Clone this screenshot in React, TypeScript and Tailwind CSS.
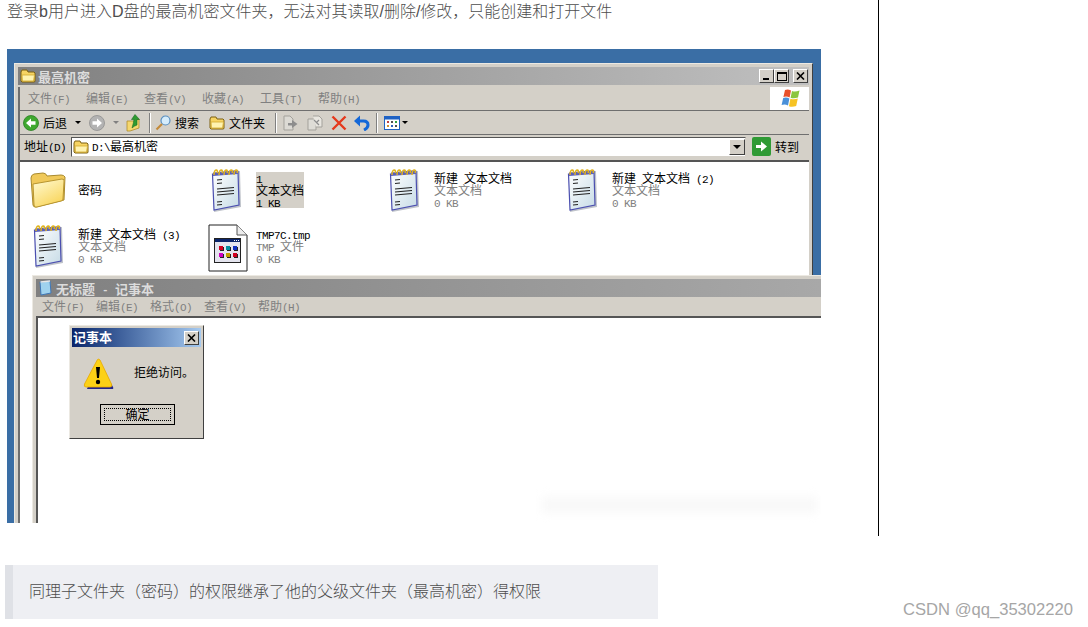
import type { ReactNode } from "react";

const simFont = "[font-family:'Noto_Sans_CJK_SC','Liberation_Sans',sans-serif]";

// old bitmap look: CJK cells are 12px, ascii cells are 6px
function Sim({ text }: { text: string }) {
  const parts = text.split(/([\x00-\x7f]+)/).filter(Boolean);
  return (
    <>
      {parts.map((p, i) =>
        /^[\x00-\x7f]/.test(p) ? (
          <span key={i} className="inline-block leading-[12px] font-['Liberation_Mono',monospace] text-[11px] tracking-[-0.6px] whitespace-pre">
            {p}
          </span>
        ) : (
          <span key={i} className="inline-block leading-[12px]">{p}</span>
        )
      )}
    </>
  );
}

function FolderSmall({ className = "w-4 h-[14px]" }: { className?: string }) {
  return (
    <svg viewBox="0 0 16 14" className={className}>
      <path d="M1 3 L2 1 H7 L8 3 H14 L15 4 V12.5 L14 13 H2 L1 12 Z" fill="#f7d463" stroke="#7d6113" strokeWidth="1" />
      <path d="M2 6 H14.5 L13.5 12 H2.5 Z" fill="#fff3b0" stroke="#d2a92f" strokeWidth="0.8" />
    </svg>
  );
}

function FolderBig() {
  return (
    <svg viewBox="0 0 36 36" className="w-9 h-9">
      <defs>
        <linearGradient id="fb" x1="0" y1="0" x2="0.6" y2="1">
          <stop offset="0" stopColor="#fffbd6" />
          <stop offset="1" stopColor="#f9d65e" />
        </linearGradient>
      </defs>
      <path d="M1 6 Q1 3 4 2 L13 1 Q16 1 17 4 L31 3 Q34 3 35 5 L34 28 L6 35 Q3 35 3 33 Z" fill="#f0c95a" stroke="#a98a2e" strokeWidth="1" />
      <path d="M3 12 L32 7 Q35 7 34 10 L33 27 Q33 29 31 29 L7 35 Q4 36 4 33 Z" fill="url(#fb)" stroke="#b8952f" strokeWidth="1" />
    </svg>
  );
}

function NotepadIcon() {
  return (
    <svg viewBox="0 0 30 43" className="w-[30px] h-[43px]">
      <defs>
        <linearGradient id="np" x1="0" y1="0" x2="1" y2="1">
          <stop offset="0" stopColor="#ffffff" />
          <stop offset="1" stopColor="#c6dbe6" />
        </linearGradient>
      </defs>
      <path d="M2 5 L29 2 L30 38 L3 43 Z" fill="#bfc3ca" />
      <path d="M1.5 5 L27 2.5 L28 36 L3 41 Z" fill="url(#np)" stroke="#4b4fb0" strokeWidth="1.2" />
      <path d="M2 3.5 L27 1 V5 L2 7 Z" fill="#5a5fb8" />
      {[3, 8, 13, 18, 23].map((x) => (
        <path key={x} d={`M${x} 6 Q${x} 1 ${x + 2.5} 1 Q${x + 4} 1.5 ${x + 3} 4`} fill="none" stroke="#e0b420" strokeWidth="1.5" />
      ))}
      <path d="M6 11 L11 10.5 M6 14.5 L11 14 M6 20 L23 18.5 M6 23 L23 21.5 M6 26 L23 24.5 M6 33 L11 32.5 M6 36 L11 35.5" stroke="#222" strokeWidth="1.1" />
    </svg>
  );
}

function TmpIcon() {
  const dots = ["#d00020", "#0090a0", "#1030c0", "#d000c0", "#c0a000", "#d00020"];
  return (
    <svg viewBox="0 0 40 48" className="w-10 h-12">
      <path d="M1 1 H29 L39 11 V47 H1 Z" fill="#fff" stroke="#222" strokeWidth="1" />
      <path d="M29 1 V11 H39" fill="#ececec" stroke="#555" strokeWidth="1" />
      <rect x="6.5" y="14.5" width="26" height="24" fill="#e4e4ee" stroke="#222" strokeWidth="1" />
      <rect x="7" y="15" width="25" height="3" fill="#0a246a" />
      <path d="M26 16.5 H31" stroke="#fff" strokeWidth="1" strokeDasharray="1 1" />
      {dots.map((c, i) => (
        <g key={i}>
          <rect x={12 + (i % 3) * 7} y={23 + Math.floor(i / 3) * 7} width="4" height="4" fill="#222" />
          <rect x={11 + (i % 3) * 7} y={22 + Math.floor(i / 3) * 7} width="4" height="4" fill={c} />
        </g>
      ))}
    </svg>
  );
}

function RoundArrow({ dir, color }: { dir: "left" | "right"; color: "green" | "grey" }) {
  const fill = color === "green" ? "#3fa82f" : "#b3b3b3";
  return (
    <svg viewBox="0 0 16 16" className="w-4 h-4 shrink-0">
      <circle cx="8" cy="8" r="7.5" fill={fill} stroke={color === "green" ? "#2a7d22" : "#8f8f8f"} strokeWidth="0.8" />
      <path
        d={dir === "left" ? "M3 8 L8 3.5 V6.3 H12.5 V9.7 H8 V12.5 Z" : "M13 8 L8 3.5 V6.3 H3.5 V9.7 H8 V12.5 Z"}
        fill="#fff"
      />
    </svg>
  );
}

function Caret({ className = "" }: { className?: string }) {
  return <span className={`w-0 h-0 border-x-[3px] border-x-transparent border-t-[3px] ${className}`} />;
}

function WinFlag() {
  return (
    <svg viewBox="0 0 20 19" className="w-5 h-[19px]">
      <path d="M5 1 Q8 0 11 1.5 L9.6 8.4 Q6.5 7 3.4 8 Z" fill="#e8502a" />
      <path d="M12 2 Q15 3.4 19.5 1.6 L18 8.5 Q14 10 10.6 8.8 Z" fill="#8cc63f" />
      <path d="M3.2 9 Q6.3 8 9.4 9.4 L8 16.4 Q5 15 1.6 16 Z" fill="#4a90d9" />
      <path d="M10.4 9.8 Q14 11 17.8 9.6 L16.2 17 Q12 18.5 9 17.2 Z" fill="#f6c324" />
    </svg>
  );
}

function Sep() {
  return <span className="block w-[2px] h-[20px] bg-[#808080] border-r border-white shrink-0" />;
}

function TitleBtn({ children, className = "" }: { children: ReactNode; className?: string }) {
  return (
    <span className={`w-[15px] h-[14px] flex items-center justify-center bg-[#d4d0c8] border border-t-white border-l-white border-r-[#404040] border-b-[#404040] ${className}`}>
      {children}
    </span>
  );
}

function CloseGlyph() {
  return (
    <svg viewBox="0 0 9 8" className="w-[9px] h-2">
      <path d="M1 0.5 L8 7.5 M8 0.5 L1 7.5" stroke="#000" strokeWidth="1.6" />
    </svg>
  );
}

function FileCell({
  icon,
  name,
  type,
  size,
  selected,
}: {
  icon: ReactNode;
  name: string;
  type?: string;
  size?: string;
  selected?: boolean;
}) {
  return (
    <div className="flex items-center h-[56px]">
      <div className="w-[58px] pr-[2px] flex justify-center shrink-0">{icon}</div>
      <div className={`text-[12px] leading-[12px] text-black ${selected ? "bg-[#d4d0c8] w-12" : ""}`}>
        <div className="whitespace-pre h-3">
          <Sim text={name} />
        </div>
        {type && (
          <div className={`h-3 ${selected ? "" : "text-[#808080]"}`}>
            <Sim text={type} />
          </div>
        )}
        {size && (
          <div className={`h-3 ${selected ? "" : "text-[#808080]"}`}>
            <Sim text={size} />
          </div>
        )}
      </div>
    </div>
  );
}

export default function App() {
  const explorerMenu = ["文件(F)", "编辑(E)", "查看(V)", "收藏(A)", "工具(T)", "帮助(H)"];
  const notepadMenu = ["文件(F)", "编辑(E)", "格式(O)", "查看(V)", "帮助(H)"];

  return (
    <div className="w-[1088px] h-[627px] overflow-hidden bg-white text-[#4d4d4d] font-['Liberation_Sans','Noto_Sans_CJK_SC',sans-serif]">
      <div className="w-[879px] h-[536px] border-r border-black">
        <p className="pl-[7px] text-[16px] leading-[22px] h-[22px] translate-y-px font-light whitespace-nowrap">
          登录b用户进入D盘的最高机密文件夹，无法对其读取/删除/修改，只能创建和打开文件
        </p>

        {/* screenshot */}
        <div className={`relative ml-[7px] mt-[27px] w-[814px] h-[474px] bg-[#3a6ea5] overflow-hidden ${simFont}`}>
          {/* explorer window */}
          <div className="absolute left-[7px] top-[14px] w-[799px] h-[480px] border border-t-[#ece9e2] border-l-[#ece9e2] border-r-[#404040] border-b-[#404040] bg-[#d4d0c8] pl-[3px] pr-[3px] pt-[3px] flex flex-col">
            <div className="h-[18px] bg-gradient-to-r from-[#808080] to-[#c0c0c0] flex items-center pl-[2px] pr-[1px]">
              <FolderSmall />
              <span className="ml-[2px] text-[13px] leading-none font-bold text-[#dcdcdc]">最高机密</span>
              <div className="ml-auto flex items-center">
                <TitleBtn>
                  <span className="w-[6px] h-[2px] bg-black mt-[6px] mr-[2px]" />
                </TitleBtn>
                <TitleBtn>
                  <span className="w-[10px] h-[9px] border border-t-2 border-black" />
                </TitleBtn>
                <TitleBtn className="ml-[4px]">
                  <CloseGlyph />
                </TitleBtn>
              </div>
            </div>

            <div className="flex-1 mt-[2px] border-l-2 border-[#6f6f6f] flex flex-col">
              {/* menu */}
              <div className="h-[24px] border-b border-[#6f6f6f] flex items-center pl-2 text-[12px] text-[#808080] shrink-0">
                <div className="flex gap-4">
                  {explorerMenu.map((m) => (
                    <span key={m} className="w-[42px] whitespace-pre -translate-y-px">
                      <Sim text={m} />
                    </span>
                  ))}
                </div>
                <div className="ml-auto w-[39px] h-[23px] bg-white flex items-center justify-center">
                  <WinFlag />
                </div>
              </div>

              {/* toolbar */}
              <div className="h-[24px] border-b border-[#6f6f6f] flex items-center text-[12px] text-black shrink-0">
                <span className="ml-[3px]">
                  <RoundArrow dir="left" color="green" />
                </span>
                <span className="ml-[4px]">后退</span>
                <Caret className="ml-[8px] border-t-black" />
                <span className="ml-[8px]">
                  <RoundArrow dir="right" color="grey" />
                </span>
                <Caret className="ml-[8px] border-t-[#808080]" />
                <svg viewBox="0 0 15 18" className="ml-[7px] w-[15px] h-[18px]">
                  <path d="M1 7 H8 L13 5 V14 L4 17 H1 Z" fill="#f5d76e" stroke="#b08e2c" strokeWidth="0.8" />
                  <path d="M9 0.5 L13.5 5.5 H11 V11 Q8 12 6 14 Q7.5 9 8 5.5 H5.5 Z" fill="#2e9b32" stroke="#1c6f22" strokeWidth="0.6" />
                </svg>
                <span className="ml-[8px]">
                  <Sep />
                </span>
                <svg viewBox="0 0 16 16" className="ml-[4px] w-4 h-4">
                  <circle cx="10.5" cy="5.5" r="4.5" fill="#d5ecfb" stroke="#5a8fc0" strokeWidth="1.2" />
                  <path d="M7 9 L1.5 14.5" stroke="#c48a3a" strokeWidth="2.2" />
                </svg>
                <span className="ml-[4px]">搜索</span>
                <span className="ml-[10px]">
                  <FolderSmall className="w-[16px] h-[14px]" />
                </span>
                <span className="ml-[4px]">文件夹</span>
                <span className="ml-[10px]">
                  <Sep />
                </span>
                <svg viewBox="0 0 16 16" className="ml-[5px] w-4 h-4">
                  <path d="M2 1 H8 L11 4 V15 H2 Z" fill="#dcdad4" stroke="#a3a19b" />
                  <path d="M6 8 H10 V5 L15.5 9 L10 13 V10.5 H6 Z" fill="#8d8d8d" />
                </svg>
                <svg viewBox="0 0 16 16" className="ml-[9px] w-4 h-4">
                  <path d="M1 4 H7 L9 6 V15 H1 Z" fill="#dedcd6" stroke="#a3a19b" />
                  <path d="M6 1 H12 L15 4 V12 H9" fill="#e8e6e0" stroke="#a3a19b" />
                  <path d="M7 5 L12 10 M12 5 L9 8" stroke="#8d8d8d" strokeWidth="1.2" />
                </svg>
                <svg viewBox="0 0 16 16" className="ml-[8px] w-4 h-4">
                  <path d="M1.5 1.5 L14.5 14.5 M14.5 1.5 L1.5 14.5" stroke="#e5391c" strokeWidth="2.4" />
                </svg>
                <svg viewBox="0 0 16 16" className="ml-[7px] w-4 h-4">
                  <path d="M4 6 H9.5 Q14 6 14 10 Q14 13 10 15" fill="none" stroke="#1468d8" strokeWidth="3" />
                  <path d="M0 6 L6 0.5 V11.5 Z" fill="#1468d8" />
                </svg>
                <span className="ml-[6px]">
                  <Sep />
                </span>
                <svg viewBox="0 0 16 16" className="ml-[6px] w-4 h-4">
                  <rect x="0.5" y="1.5" width="15" height="13" fill="#fff" stroke="#1f62c4" />
                  <rect x="1" y="2" width="14" height="2.5" fill="#1f62c4" />
                  <rect x="3" y="6" width="2" height="2" fill="#c04040" />
                  <rect x="7" y="6" width="2" height="2" fill="#505050" />
                  <rect x="11" y="6" width="2" height="2" fill="#30a040" />
                  <rect x="3" y="10" width="2" height="2" fill="#d09030" />
                  <rect x="7" y="10" width="2" height="2" fill="#3060c0" />
                  <rect x="11" y="10" width="2" height="2" fill="#505050" />
                </svg>
                <Caret className="ml-[2px] border-t-black" />
              </div>

              {/* address */}
              <div className="h-[23px] flex items-center text-[12px] text-black shrink-0">
                <span className="ml-[4px] w-[47px] whitespace-pre -translate-y-px">
                  <Sim text="地址(D)" />
                </span>
                <div className="w-[675px] h-[20px] bg-white border border-t-[#555] border-l-[#555] border-r-[#d4d0c8] border-b-[#d4d0c8] flex items-center pl-[1px]">
                  <FolderSmall />
                  <span className="ml-[3px] whitespace-pre -translate-y-px">
                    <Sim text="D:\最高机密" />
                  </span>
                  <span className="ml-auto w-[16px] h-[16px] bg-[#d4d0c8] border border-t-white border-l-white border-r-[#404040] border-b-[#404040] flex items-center justify-center">
                    <span className="w-0 h-0 border-x-[4px] border-x-transparent border-t-[4px] border-t-black" />
                  </span>
                </div>
                <span className="ml-[6px] w-[19px] h-[19px] rounded-[2px] bg-[#2f9a35] flex items-center justify-center">
                  <svg viewBox="0 0 13 13" className="w-[13px] h-[13px]">
                    <path d="M1 5 H6 V1.5 L12 6.5 L6 11.5 V8 H1 Z" fill="#fff" />
                  </svg>
                </span>
                <span className="ml-[4px]">转到</span>
              </div>

              <div className="h-[2px] shrink-0" />

              {/* files */}
              <div className="flex-1 border-t-2 border-[#555] bg-white">
                <div className="grid grid-cols-[repeat(4,178px)]">
                  <FileCell icon={<FolderBig />} name="密码" />
                  <FileCell icon={<NotepadIcon />} name="1" type="文本文档" size="1 KB" selected />
                  <FileCell icon={<NotepadIcon />} name="新建 文本文档" type="文本文档" size="0 KB" />
                  <FileCell icon={<NotepadIcon />} name="新建 文本文档 (2)" type="文本文档" size="0 KB" />
                  <FileCell icon={<NotepadIcon />} name="新建 文本文档 (3)" type="文本文档" size="0 KB" />
                  <FileCell icon={<span className="ml-[3px] mt-[4px] block"><TmpIcon /></span>} name="TMP7C.tmp" type="TMP 文件" size="0 KB" />
                </div>
              </div>
            </div>
          </div>

          {/* notepad window */}
          <div className="absolute left-[25px] top-[226px] right-0 bottom-0 border-t border-l border-[#ece9e2] bg-[#d4d0c8] pl-[3px] pt-[3px] flex flex-col">
            <div className="h-[18px] bg-gradient-to-r from-[#808080] to-[#a8a8a8] flex items-center pl-[3px] shrink-0">
              <svg viewBox="0 0 13 16" className="w-[13px] h-4">
                <path d="M1 2 L11 1 L12 13 L2 15 Z" fill="#9fd2ee" stroke="#3f78b8" strokeWidth="1" />
                <path d="M1.5 2 L11 1" stroke="#e8e8e8" strokeWidth="1.4" />
              </svg>
              <span className="ml-[4px] text-[13px] leading-none font-bold text-[#dcdcdc]">无标题</span>
              <span className="mx-[1px] text-[13px] leading-none font-bold text-[#dcdcdc] whitespace-pre">
                <Sim text=" - " />
              </span>
              <span className="text-[13px] leading-none font-bold text-[#dcdcdc]">记事本</span>
            </div>
            <div className="h-[19px] flex items-center pl-[6px] gap-3 text-[12px] text-[#808080] shrink-0">
              {notepadMenu.map((m) => (
                <span key={m} className="w-[42px] whitespace-pre -translate-y-px">
                  <Sim text={m} />
                </span>
              ))}
            </div>
            <div className="relative flex-1 bg-white border-t-2 border-l-2 border-[#555]">
              {/* blurred watermark */}
              <div className="absolute left-[504px] top-[178px] w-[275px] h-[18px] bg-[#f9f9f9] blur-[4px]" />

              {/* alert dialog */}
              <div className="absolute left-[31px] top-[7px] w-[135px] h-[114px] bg-[#d4d0c8] border border-t-[#ece9e2] border-l-[#ece9e2] border-r-[#404040] border-b-[#404040] p-[2px] text-black">
                <div className="h-[19px] bg-gradient-to-r from-[#0a246a] to-[#a6caf0] flex items-center pl-[1px] pr-[2px]">
                  <span className="text-[13px] leading-none font-bold text-white -translate-y-px">记事本</span>
                  <TitleBtn className="ml-auto w-4">
                    <CloseGlyph />
                  </TitleBtn>
                </div>
                <div className="flex items-center pl-[11px] mt-[11px]">
                  <svg viewBox="0 0 32 32" className="w-8 h-8">
                    <path d="M15 2 L30 29 Q31 31 29 31 H4 Z" fill="#23268a" />
                    <path d="M14.5 1.5 Q15.5 0.5 17 2 L28.5 26 Q29.5 29 27 29 H3 Q0.5 29 1.5 26 Z" fill="#fcd116" stroke="#e8a800" strokeWidth="0.8" />
                    <path d="M13 9 H17 L16 20 H14 Z" fill="#000" />
                    <circle cx="15" cy="24" r="2.2" fill="#000" />
                  </svg>
                  <span className="ml-[19px] text-[12px] -translate-y-[2px]">拒绝访问。</span>
                </div>
                <div className="mt-[14px] ml-[28px] w-[75px] h-[21px] border border-black bg-[#d4d0c8] p-[3px]">
                  <div className="h-full border border-dotted border-black flex items-center justify-center text-[12px] leading-none">
                    <span className="-translate-y-px">确定</span>
                  </div>
                </div>
              </div>
            </div>
          </div>
        </div>
      </div>

      <div className="flex items-end justify-between mt-[29px] pl-[5px] pr-[15px]">
        <blockquote className="w-[653px] h-[54px] bg-[#eeeff3] border-l-[8px] border-[#dfe1e6] pl-4 pb-[1px] flex items-center text-[16px] font-light text-[#4d4d4d] whitespace-nowrap">
          同理子文件夹（密码）的权限继承了他的父级文件夹（最高机密）得权限
        </blockquote>
        <span className="text-[16.6px] leading-[20px] -mb-[1px] text-[#a6a6a6]">
          CSDN @qq_35302220
        </span>
      </div>
    </div>
  );
}
